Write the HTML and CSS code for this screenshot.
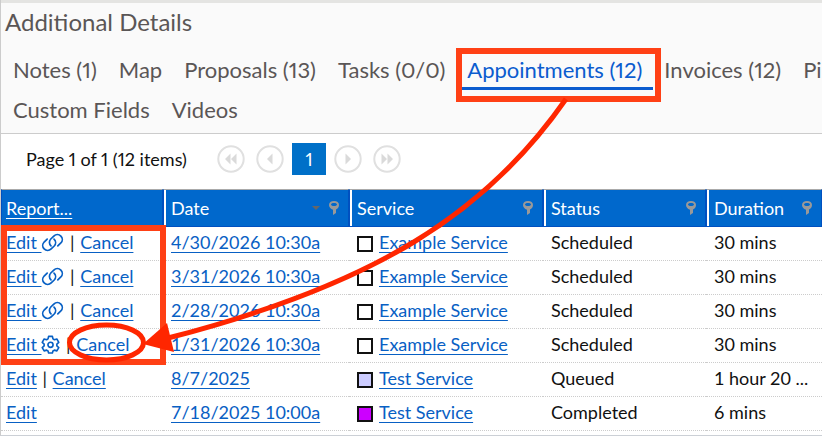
FILE: index.html
```html
<!DOCTYPE html>
<html lang="en">
<head>
    <meta charset="UTF-8">
    <meta name="viewport" content="width=device-width, initial-scale=1.0">
    <title>Additional Details</title>
    <link rel="stylesheet" href="styles.css">
</head>
<body>
    <svg class="symbols" aria-hidden="true">
        <symbol id="icon-link" viewBox="0 0 24 20">
            <g fill="none" stroke="currentColor" stroke-width="1.8" stroke-linecap="round">
                <path d="M10.4 13.6C8.3 11.6 8.2 8.4 10.2 6.3L13.4 3.2C15.5 1.2 18.8 1.2 20.8 3.2C22.8 5.2 22.8 8.4 20.8 10.5L17.6 13.6"/>
                <path d="M13.6 6.4C15.7 8.4 15.8 11.6 13.8 13.7L10.6 16.8C8.5 18.8 5.2 18.8 3.2 16.8C1.2 14.8 1.2 11.6 3.2 9.5L6.4 6.4"/>
            </g>
        </symbol>
        <symbol id="icon-gear" viewBox="0 0 20 20">
            <g fill="none" stroke="currentColor" stroke-width="1.7" stroke-linejoin="round">
                <path d="M8 1.5h4l.6 2.6 1.5.9 2.6-.8 2 3.5-2 1.8v1.9l2 1.8-2 3.5-2.6-.8-1.5.9-.6 2.2H8l-.6-2.2-1.5-.9-2.6.8-2-3.5 2-1.8V9.5l-2-1.8 2-3.5 2.6.8 1.5-.9z"/>
                <circle cx="10" cy="10.3" r="2.7"/>
            </g>
        </symbol>
        <symbol id="icon-filter" viewBox="0 0 10 14">
            <path fill="#999" fill-rule="evenodd" d="M5 0C8 0 10 1.5 10 4C10 6 8.8 7.6 7 8.5V12L4 14V8.7C1.5 7.8 0 6.200 0 4C0 1.5 2 0 5 0ZM5 2C3 2 2 2.600 2 3.500S3 5 5 5S8 4.400 8 3.500S7 2 5 2Z"/>
        </symbol>
        <symbol id="icon-prev" viewBox="0 0 28 28">
            <circle cx="14" cy="14" r="12.7" fill="none" stroke="#e0e0e0" stroke-width="2"/>
            <path d="M16.5 8.5v11L11 14z" fill="#dadada"/>
        </symbol>
        <symbol id="icon-first" viewBox="0 0 28 28">
            <circle cx="14" cy="14" r="12.7" fill="none" stroke="#e0e0e0" stroke-width="2"/>
            <path d="M13.5 8.5v11L8 14zM19.5 8.5v11L14 14z" fill="#dadada"/>
        </symbol>
    </svg>

    <main class="details">
        <header class="details-head">
            <h1>Additional Details</h1>
            <nav class="tabs">
                <div class="tab-row">
                    <a class="tab" href="#notes">Notes (1)</a>
                    <a class="tab" href="#map">Map</a>
                    <a class="tab" href="#proposals">Proposals (13)</a>
                    <a class="tab" href="#tasks">Tasks (0/0)</a>
                    <a class="tab active" href="#appointments">Appointments (12)</a>
                    <a class="tab" href="#invoices">Invoices (12)</a>
                    <a class="tab" href="#pi">Pi</a>
                </div>
                <div class="tab-row">
                    <a class="tab" href="#custom-fields">Custom Fields</a>
                    <a class="tab" href="#videos">Videos</a>
                </div>
            </nav>
        </header>

        <div class="pager">
            <span class="pager-text">Page 1 of 1 (12 items)</span>
            <button type="button" class="pager-btn" aria-label="First page" disabled><svg><use href="#icon-first"/></svg></button>
            <button type="button" class="pager-btn" aria-label="Previous page" disabled><svg><use href="#icon-prev"/></svg></button>
            <button type="button" class="pager-current">1</button>
            <button type="button" class="pager-btn flip" aria-label="Next page" disabled><svg><use href="#icon-prev"/></svg></button>
            <button type="button" class="pager-btn flip" aria-label="Last page" disabled><svg><use href="#icon-first"/></svg></button>
        </div>

        <table class="grid">
            <colgroup>
                <col class="col-report">
                <col class="col-date">
                <col class="col-service">
                <col class="col-status">
                <col>
            </colgroup>
            <thead>
                <tr>
                    <th><a href="#report">Report...</a></th>
                    <th><div class="th-inner">Date <span class="sort"></span><svg class="filter"><use href="#icon-filter"/></svg></div></th>
                    <th><div class="th-inner">Service <svg class="filter"><use href="#icon-filter"/></svg></div></th>
                    <th><div class="th-inner">Status <svg class="filter"><use href="#icon-filter"/></svg></div></th>
                    <th><div class="th-inner">Duration <svg class="filter"><use href="#icon-filter"/></svg></div></th>
                </tr>
            </thead>
            <tbody>
                <tr>
                    <td><a href="#edit">Edit <svg class="link-icon"><use href="#icon-link"/></svg></a> <span class="sep">|</span> <a href="#cancel">Cancel</a></td>
                    <td><a href="#date">4/30/2026 10:30a</a></td>
                    <td><span class="swatch"></span><a href="#service">Example Service</a></td>
                    <td>Scheduled</td>
                    <td>30 mins</td>
                </tr>
                <tr>
                    <td><a href="#edit">Edit <svg class="link-icon"><use href="#icon-link"/></svg></a> <span class="sep">|</span> <a href="#cancel">Cancel</a></td>
                    <td><a href="#date">3/31/2026 10:30a</a></td>
                    <td><span class="swatch"></span><a href="#service">Example Service</a></td>
                    <td>Scheduled</td>
                    <td>30 mins</td>
                </tr>
                <tr>
                    <td><a href="#edit">Edit <svg class="link-icon"><use href="#icon-link"/></svg></a> <span class="sep">|</span> <a href="#cancel">Cancel</a></td>
                    <td><a href="#date">2/28/2026 10:30a</a></td>
                    <td><span class="swatch"></span><a href="#service">Example Service</a></td>
                    <td>Scheduled</td>
                    <td>30 mins</td>
                </tr>
                <tr>
                    <td><a href="#edit">Edit <svg class="gear-icon"><use href="#icon-gear"/></svg></a> <span class="sep">|</span> <a href="#cancel">Cancel</a></td>
                    <td><a href="#date">1/31/2026 10:30a</a></td>
                    <td><span class="swatch"></span><a href="#service">Example Service</a></td>
                    <td>Scheduled</td>
                    <td>30 mins</td>
                </tr>
                <tr>
                    <td><a href="#edit">Edit</a> <span class="sep">|</span> <a href="#cancel">Cancel</a></td>
                    <td><a href="#date">8/7/2025</a></td>
                    <td><span class="swatch lavender"></span><a href="#service">Test Service</a></td>
                    <td>Queued</td>
                    <td>1 hour 20 ...</td>
                </tr>
                <tr>
                    <td><a href="#edit">Edit</a></td>
                    <td><a href="#date">7/18/2025 10:00a</a></td>
                    <td><span class="swatch purple"></span><a href="#service">Test Service</a></td>
                    <td>Completed</td>
                    <td>6 mins</td>
                </tr>
            </tbody>
        </table>
    </main>

    <!-- callouts over the page -->
    <svg class="callouts" width="822" height="436" viewBox="0 0 822 436" aria-hidden="true">
        <g fill="none" stroke="#ff4015" stroke-width="6">
            <rect x="459" y="51" width="199" height="48"/>
            <rect x="4" y="228" width="159" height="134"/>
        </g>
        <ellipse cx="106.5" cy="342.5" rx="37" ry="17.5" fill="none" stroke="#ff2600" stroke-width="5"/>
        <path d="M566 99C486 214 374 285 168 338" fill="none" stroke="#ff2600" stroke-width="5"/>
        <path d="M143 344L167 323L174 352Z" fill="#ff2600"/>
    </svg>
</body>
</html>
```

FILE: styles.css
```css
* {
    box-sizing: border-box;
}
body {
    margin: 0;
    font-family: Lato, sans-serif;
    font-size: 18px;
    color: #111;
    background-color: #fff;
    overflow: hidden;
}
.symbols {
    display: none;
}
.details {
    padding-bottom: 4px;
    border-left: 1px solid #ccc;
    border-bottom: 1px solid #ccd0d6;
}
.details-head {
    height: 134px;
    padding-top: 3px;
    background-color: #fafafa;
    border-top: 3px solid #e4e4e2;
    border-bottom: 1px solid #ccc;
}
h1 {
    margin: 0 0 12px;
    padding-left: 4px;
    font-size: 24px;
    line-height: 32px;
    font-weight: 400;
    color: #5a5656;
}
.tabs {
    padding-left: 1px;
    overflow: hidden;
    font-variant-numeric: proportional-nums;
}
.tab-row {
    display: flex;
}
.tab {
    flex: none;
    height: 40px;
    padding: 0 11px;
    font-size: 22px;
    line-height: 40px;
    color: #5a5656;
    text-decoration: none;
}
.tab.active {
    color: #0b5ccf;
    border-bottom: 3px solid #0b5ccf;
}
.pager {
    display: flex;
    align-items: center;
    height: 55px;
    padding: 0 0 6px 25px;
    font-variant-numeric: proportional-nums;
}
.pager-text {
    width: 191px;
}
.pager button {
    padding: 0;
    border: 0;
    background: none;
    font: inherit;
}
.pager .pager-btn {
    width: 28px;
    height: 28px;
    margin-right: 11px;
}
.pager-btn svg {
    display: block;
    width: 28px;
    height: 28px;
}
.flip svg {
    transform: scaleX(-1);
}
.pager .pager-current {
    width: 34px;
    height: 32px;
    margin: 0 8px 0 -3px;
    color: #fff;
    background-color: #0070c8;
}
.grid {
    width: 100%;
    table-layout: fixed;
    border-collapse: separate;
    border-spacing: 0;
}
.col-report {
    width: 162px;
}
.col-date {
    width: 186px;
}
.col-service {
    width: 194px;
}
.col-status {
    width: 163px;
}
.grid th {
    height: 38px;
    padding: 0 9px 0 7px;
    text-align: left;
    font-weight: 400;
    color: #fff;
    background-color: #0068cc;
    border: 1px solid #0050c0;
    border-top-color: #aaa;
    box-shadow: inset 2px 0 #fff;
}
.grid th:first-child {
    padding-left: 4px;
    box-shadow: none;
}
.grid th a {
    color: #fff;
}
.th-inner {
    display: flex;
    align-items: center;
}
.filter {
    width: 10px;
    height: 14px;
    margin-left: auto;
}
.sort {
    margin-left: auto;
    border: 4px solid transparent;
    border-top-color: #666;
    border-bottom: 0;
}
.sort + .filter {
    margin-left: 9px;
}
.grid td {
    height: 34px;
    padding: 0 0 3px 8px;
    white-space: nowrap;
    border-bottom: 1px dotted #ccc;
}
.grid td:first-child {
    padding-left: 5px;
}
.grid td a {
    color: #0860c4;
}
.grid a {
    text-underline-offset: 3px;
}
.sep {
    margin: 0 1px;
}
.link-icon {
    width: 23px;
    height: 19px;
    vertical-align: -3px;
}
.gear-icon {
    width: 19px;
    height: 19px;
    vertical-align: -3px;
}
.swatch {
    display: inline-block;
    width: 16px;
    height: 16px;
    margin-right: 6px;
    border: 2px solid #111;
    background-color: #fff;
    vertical-align: -3px;
}
.lavender {
    background-color: #ccf;
}
.purple {
    background-color: #c0f;
}
.callouts {
    position: absolute;
    top: 0;
    left: 0;
    pointer-events: none;
}
```
